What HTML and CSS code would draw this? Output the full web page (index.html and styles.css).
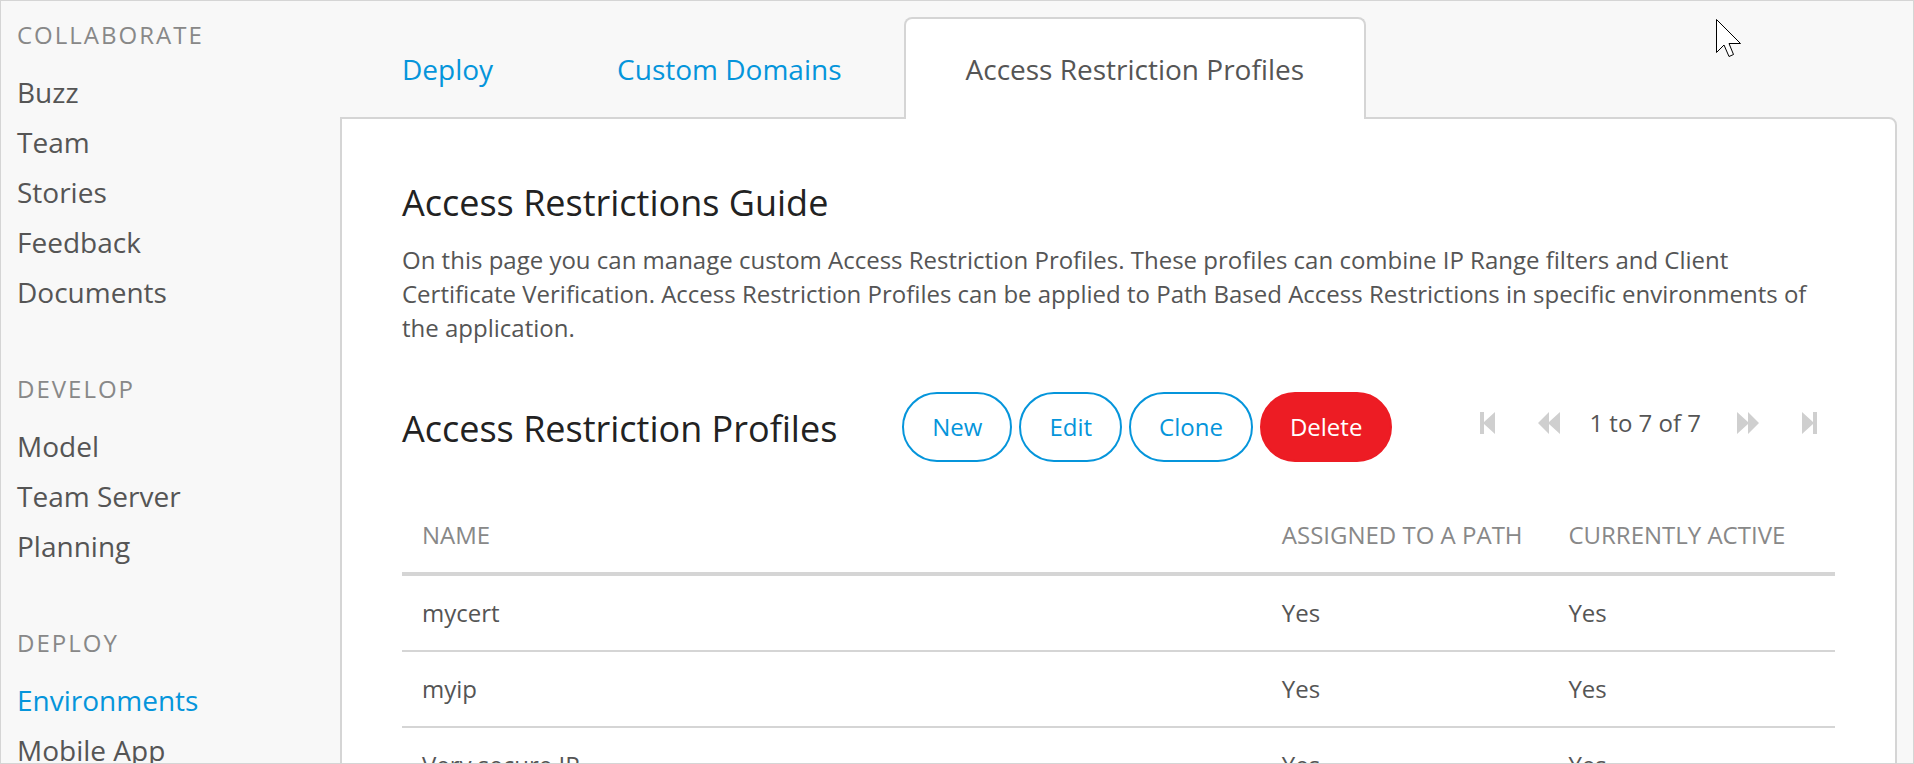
FILE: index.html
```html
<!DOCTYPE html>
<html lang="en">
<head>
<meta charset="utf-8">
<title>Access Restriction Profiles</title>
<link rel="stylesheet" href="styles.css">
</head>
<body>
<div class="frame">
  <nav class="sidebar" aria-label="Project">
    <section class="nav-group">
      <h2 class="nav-title">COLLABORATE</h2>
      <ul class="nav-list">
        <li><a class="nav-link" href="#">Buzz</a></li>
        <li><a class="nav-link" href="#">Team</a></li>
        <li><a class="nav-link" href="#">Stories</a></li>
        <li><a class="nav-link" href="#">Feedback</a></li>
        <li><a class="nav-link" href="#">Documents</a></li>
      </ul>
    </section>
    <section class="nav-group">
      <h2 class="nav-title">DEVELOP</h2>
      <ul class="nav-list">
        <li><a class="nav-link" href="#">Model</a></li>
        <li><a class="nav-link" href="#">Team Server</a></li>
        <li><a class="nav-link" href="#">Planning</a></li>
      </ul>
    </section>
    <section class="nav-group">
      <h2 class="nav-title">DEPLOY</h2>
      <ul class="nav-list">
        <li><a class="nav-link nav-link-active" href="#">Environments</a></li>
        <li><a class="nav-link" href="#">Mobile App</a></li>
      </ul>
    </section>
  </nav>

  <main class="main">
    <div class="tabs">
      <a class="tab" href="#">Deploy</a>
      <a class="tab" href="#">Custom Domains</a>
      <a class="tab tab-active" href="#" aria-current="page">Access Restriction Profiles</a>
    </div>
    <div class="panel">
      <h1 class="heading">Access Restrictions Guide</h1>
      <p class="intro">On this page you can manage custom Access Restriction Profiles. These profiles can combine IP Range filters and Client Certificate Verification. Access Restriction Profiles can be applied to Path Based Access Restrictions in specific environments of the application.</p>

      <div class="toolbar">
        <h2 class="heading toolbar-title">Access Restriction Profiles</h2>
        <div class="actions">
          <button class="btn" type="button">New</button>
          <button class="btn" type="button">Edit</button>
          <button class="btn" type="button">Clone</button>
          <button class="btn btn-danger" type="button">Delete</button>
        </div>
        <div class="pager">
          <button class="pager-btn" type="button" aria-label="First page">
            <svg width="15" height="22" viewBox="0 0 15 22"><path d="M0 0h4v10L15 0v22L4 12v10H0z"/></svg>
          </button>
          <button class="pager-btn" type="button" aria-label="Previous page">
            <svg width="22" height="22" viewBox="0 0 22 22"><path d="M0 11 11 0v10L22 0v22L11 12v10z"/></svg>
          </button>
          <span class="pager-text">1 to 7 of 7</span>
          <button class="pager-btn" type="button" aria-label="Next page">
            <svg width="22" height="22" viewBox="0 0 22 22"><path d="M22 11 11 0v10L0 0v22l11-10v10z"/></svg>
          </button>
          <button class="pager-btn" type="button" aria-label="Last page">
            <svg width="15" height="22" viewBox="0 0 15 22"><path d="M15 0h-4v10L0 0v22l11-10v10h4z"/></svg>
          </button>
        </div>
      </div>

      <table class="grid">
        <thead>
          <tr><th class="col-name">NAME</th><th class="col-flag">ASSIGNED TO A PATH</th><th class="col-flag">CURRENTLY ACTIVE</th></tr>
        </thead>
        <tbody>
          <tr><td>mycert</td><td>Yes</td><td>Yes</td></tr>
          <tr><td>myip</td><td>Yes</td><td>Yes</td></tr>
          <tr><td>Very secure IP</td><td>Yes</td><td>Yes</td></tr>
        </tbody>
      </table>
    </div>
  </main>

  <svg class="cursor" width="27" height="40" viewBox="0 0 27 40" aria-hidden="true">
    <path d="M1.5 1.5V34.5L9 27L14 38.5L18.5 36.5L14 25.5H25.5z"/>
  </svg>
</div>
</body>
</html>
```

FILE: styles.css
```css
* {
  box-sizing: border-box;
}

body {
  margin: 0;
  background: #f8f8f8;
  color: #555;
  font-family: "Open Sans", "Noto Sans", sans-serif;
  font-size: 24px;
  line-height: 34px;
}

h1,
h2,
p,
ul {
  margin: 0;
  padding: 0;
  font-weight: 400;
}

.frame {
  position: relative;
  display: flex;
  height: 100vh;
  overflow: hidden;
  border: 1px solid #d5d5d5;
}

/* Sidebar */

.sidebar {
  flex: none;
  width: 339px;
  padding: 16px;
}

.nav-group {
  margin-bottom: 54px;
}

.nav-title {
  margin-bottom: 14px;
  color: #888;
  font-size: 24px;
  line-height: 36px;
  letter-spacing: 2px;
}

.nav-list {
  list-style: none;
}

.nav-link {
  display: block;
  color: #555;
  font-size: 28px;
  line-height: 50px;
  text-decoration: none;
}

.nav-link-active {
  color: #0595db;
}

/* Tabs */

.main {
  display: flex;
  flex: 1;
  flex-direction: column;
  min-width: 0;
  padding: 16px 16px 0 0;
}

.tabs {
  display: flex;
  flex: none;
}

.tab {
  margin-bottom: -2px;
  padding: 31px 60px;
  border: 2px solid transparent;
  border-bottom: 0;
  border-radius: 8px 8px 0 0;
  color: #0595db;
  font-size: 28px;
  line-height: 38px;
  text-decoration: none;
}

.tab-active {
  position: relative;
  border-color: #d5d5d5;
  background: #fff;
  color: #555;
}

.panel {
  flex: 1 0 auto;
  padding: 59px 60px;
  border: 2px solid #d5d5d5;
  border-radius: 0 8px 0 0;
  background: #fff;
}

.heading {
  color: #222;
  font-size: 36px;
  line-height: 50px;
}

.intro {
  margin: 15px 0 47px;
}

/* Toolbar */

.toolbar {
  display: flex;
  align-items: center;
  margin-bottom: 36px;
}

.toolbar-title {
  padding-top: 4px;
}

.actions {
  display: flex;
  gap: 7px;
  margin-left: 65px;
}

.btn {
  padding: 16px 28px;
  border: 2px solid #0595db;
  border-radius: 36px;
  background: #fff;
  color: #0595db;
  font: inherit;
}

.btn-danger {
  border-color: #ed1c24;
  background: #ed1c24;
  color: #fff;
}

.pager {
  display: flex;
  align-items: center;
  gap: 43px;
  margin: 0 18px 8px auto;
}

.pager-btn {
  display: flex;
  padding: 0;
  border: 0;
  background: none;
  fill: #cfcfcf;
}

.pager-text {
  margin: 0 -7px 0 -14px;
}

/* Table */

.grid {
  width: 100%;
  border-collapse: separate;
  border-spacing: 0;
  table-layout: fixed;
}

.grid th {
  padding: 20px;
  border-bottom: 4px solid #d5d5d5;
  color: #888;
  font-weight: 400;
  text-align: left;
  white-space: nowrap;
}

.grid td {
  padding: 20px;
  border-bottom: 2px solid #d5d5d5;
}

.col-name {
  width: 60%;
}

.col-flag {
  width: 20%;
}

.cursor {
  position: absolute;
  top: 17px;
  right: 171px;
  fill: #fff;
  stroke: #000;
  stroke-width: 1;
}
```
